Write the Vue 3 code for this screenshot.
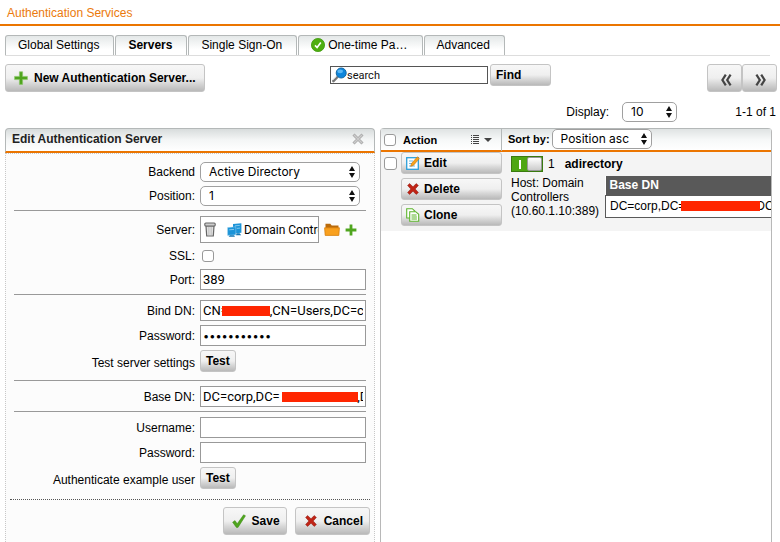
<script setup>
import { ref } from 'vue'

const tabs = [
  { label: 'Global Settings' },
  { label: 'Servers', active: true },
  { label: 'Single Sign-On' },
  { label: 'One-time Pa…', ok: true },
  { label: 'Advanced' }
]
const query = ref('')
const pageSize = ref('10')
const sort = ref('Position asc')
const form = ref({
  backend: 'Active Directory',
  position: '1',
  ssl: false,
  port: '389',
  bindDn: 'CN=' + '\u00a0'.repeat(13) + ',CN=Users,DC=corp',
  bindPassword: 'abcdefghijk',
  baseDn: 'DC=corp,DC=' + '\u00a0'.repeat(24) + ',DC=local',
  username: '',
  password: ''
})
</script>

<template>
  <div class="page">
    <h1 class="title">Authentication Services</h1>

    <nav class="tabs">
      <a v-for="t in tabs" :key="t.label" href="#" class="tab" :class="{ active: t.active }">
        <svg v-if="t.ok" width="14" height="14" viewBox="0 0 14 14">
          <circle cx="7" cy="7" r="6.6" fill="#4fae10" stroke="#3f9a0c" stroke-width=".8" />
          <path d="M4 7.4 6.1 9.6 9.8 4.6" fill="none" stroke="#fff" stroke-width="1.6" />
        </svg>
        {{ t.label }}
      </a>
    </nav>

    <div class="toolbar">
      <div class="tool-left">
        <button class="btn tall">
          <svg width="14" height="14" viewBox="0 0 14 14"><path d="M5.4 0.8h3.2v4.6H13.4v3.2H8.6v4.8H5.4V8.6H.6V5.4h4.8z" fill="#4fa51e" stroke="#8cc76a" stroke-width=".7" /></svg>
          New Authentication Server...
        </button>
      </div>
      <div class="tool-search">
        <label class="search">
          <svg width="16" height="16" viewBox="0 0 16 16">
            <path d="M2.4 14 6 10.4" stroke="#777" stroke-width="2.6" stroke-linecap="round" />
            <path d="M2 13 5.4 9.6" stroke="#ccc" stroke-width="1" />
            <circle cx="10.2" cy="6" r="5" fill="#0e86dc" stroke="#1468a4" stroke-width="1" />
            <ellipse cx="9.2" cy="4.3" rx="2.8" ry="1.9" fill="#5bb8f5" />
          </svg>
          <input v-model="query" type="text" placeholder="search" aria-label="search" />
        </label>
        <button class="btn find">Find</button>
      </div>
      <div class="pager">
        <button class="btn tall page-btn" aria-label="Previous page">
          <svg width="12" height="12" viewBox="0 0 12 12"><path d="M5.8.6 2.4 6l3.4 5.4M10.6.6 7.2 6l3.4 5.4" fill="none" stroke="#444" stroke-width="2.2" /></svg>
        </button>
        <button class="btn tall page-btn" aria-label="Next page">
          <svg width="12" height="12" viewBox="0 0 12 12"><path d="M1.4.6 4.8 6l-3.4 5.4M6.2.6 9.6 6l-3.4 5.4" fill="none" stroke="#444" stroke-width="2.2" /></svg>
        </button>
      </div>
    </div>

    <div class="display">
      <label for="display">Display:</label>
      <span class="select narrow">
        <select id="display" v-model="pageSize"><option>10</option><option>25</option></select>
        <svg width="6" height="12" viewBox="0 0 6 12"><path d="M3 0 6 5H0zM3 12 0 7h6z" fill="#111" /></svg>
      </span>
      <span class="count">1-1 of 1</span>
    </div>

    <main class="columns">
      <section class="panel">
        <header class="panel-head">
          <h2>Edit Authentication Server</h2>
          <button class="close" aria-label="Close">
            <svg width="12" height="12" viewBox="0 0 12 12"><path d="M1.5 1.5 10.5 10.5M10.5 1.5 1.5 10.5" stroke="#aaa" stroke-width="3" /><path d="M2 2 10 10M10 2 2 10" stroke="#ccc" stroke-width="1.2" /></svg>
          </button>
        </header>

        <form class="form" @submit.prevent>
          <div class="group">
            <label for="backend">Backend</label>
            <span class="select">
              <select id="backend" v-model="form.backend"><option>Active Directory</option><option>LDAP</option></select>
              <svg width="6" height="12" viewBox="0 0 6 12"><path d="M3 0 6 5H0zM3 12 0 7h6z" fill="#111" /></svg>
            </span>
            <label for="position">Position:</label>
            <span class="select">
              <select id="position" v-model="form.position"><option>1</option><option>2</option></select>
              <svg width="6" height="12" viewBox="0 0 6 12"><path d="M3 0 6 5H0zM3 12 0 7h6z" fill="#111" /></svg>
            </span>
          </div>

          <div class="group">
            <span class="label">Server:</span>
            <div class="server">
              <div class="server-box">
                <svg class="trash" width="12" height="15" viewBox="0 0 12 15">
                  <path d="M2 4h8l-.7 10H2.7z" fill="#e4e4e4" stroke="#666" stroke-width="1.2" />
                  <path d="M4.4 5v8M6 5v8M7.6 5v8" stroke="#bbb" stroke-width=".7" />
                  <rect x=".8" y="1" width="10.4" height="3" rx="1" fill="#ccc" stroke="#666" stroke-width="1.1" />
                </svg>
                <svg width="15" height="14" viewBox="0 0 15 14">
                  <path d="M6 .9 14.4.2v9.6L6 10.4z" fill="#1c94d8" />
                  <path d="M.6 4.6 8.8 3.8v8l-8.2.6z" fill="#1c94d8" stroke="#9bd3f2" stroke-width=".5" />
                  <path d="M8 2.8l4.8-.4M9.8 5.4l3.2-.3M2.2 6.8l4.8-.4" stroke="#9bd3f2" stroke-width=".8" />
                  <path d="M3 12.2h4l1 1.6H1.6zM9.6 10.2h3l1.6 2H9z" fill="#1678b4" />
                </svg>
                <span>Domain Controllers</span>
              </div>
              <button class="icon" aria-label="Browse">
                <svg width="16" height="13" viewBox="0 0 16 13">
                  <path d="M1.5.8h4.8l1.4 1.6h6.8V6h-13z" fill="#b96b0c" />
                  <path d="M.6 4.8h14.8l-.6 7.6H1.2z" fill="#f9a01e" stroke="#d77f0c" stroke-width=".8" />
                </svg>
              </button>
              <button class="icon" aria-label="Add">
                <svg width="12" height="12" viewBox="0 0 12 12"><path d="M4.6.6h2.8v4h4v2.8h-4v4H4.6v-4h-4V4.6h4z" fill="#4fa51e" /></svg>
              </button>
            </div>
            <label for="ssl">SSL:</label>
            <div class="check-row"><input id="ssl" v-model="form.ssl" class="check" type="checkbox" /></div>
            <label for="port">Port:</label>
            <input id="port" v-model="form.port" class="text" type="text" />
          </div>

          <div class="group">
            <label for="bind">Bind DN:</label>
            <div class="masked">
              <input id="bind" v-model="form.bindDn" class="text" type="text" />
              <span class="mask mask-bind"></span>
            </div>
            <label for="bindpw">Password:</label>
            <input id="bindpw" v-model="form.bindPassword" class="text" type="password" />
            <span class="label low">Test server settings</span>
            <div class="test-row"><button class="btn test">Test</button></div>
          </div>

          <div class="group">
            <label for="base">Base DN:</label>
            <div class="masked">
              <input id="base" v-model="form.baseDn" class="text" type="text" />
              <span class="mask mask-base"></span>
            </div>
          </div>

          <div class="group">
            <label for="user">Username:</label>
            <input id="user" v-model="form.username" class="text" type="text" />
            <label for="pass">Password:</label>
            <input id="pass" v-model="form.password" class="text" type="password" />
            <span class="label low">Authenticate example user</span>
            <div class="test-row"><button class="btn test">Test</button></div>
          </div>

          <div class="actions">
            <button class="btn tall">
              <svg width="14" height="14" viewBox="0 0 14 14"><path d="M.6 8.2 3 6.6l2.2 3.2L11.6.8l1.9 1L6 13.4H4.4z" fill="#4fa51e" stroke="#3d8a14" stroke-width=".5" /></svg>
              Save
            </button>
            <button class="btn tall">
              <svg width="14" height="12" viewBox="0 0 12 12"><path d="M.6 2.4 2.6.6 6 3.8 9.2.6l2.2 1.8L8.2 6l3.2 3.6-2.2 1.8L6 8.2l-3.4 3.2-2-1.8L3.8 6z" fill="#c02416" stroke="#8e1a10" stroke-width=".5" /></svg>
              Cancel
            </button>
          </div>
        </form>
      </section>

      <section class="list">
        <header class="list-head">
          <div class="head-action">
            <input class="check" type="checkbox" aria-label="Select all" />
            <span class="small">Action</span>
            <button class="icon menu" aria-label="Action menu">
              <svg width="21" height="10" viewBox="0 0 21 10">
                <path d="M0 .5h1M0 2.5h1M0 4.5h1M0 6.5h1M0 8.5h1M2 .5h6M2 2.5h6M2 4.5h6M2 6.5h6M2 8.5h6" stroke="#444" />
                <path d="M13 3h8l-4 4z" fill="#444" />
              </svg>
            </button>
          </div>
          <div class="head-sort">
            <label for="sort" class="small">Sort by:</label>
            <span class="select sort">
              <select id="sort" v-model="sort"><option>Position asc</option><option>Position desc</option></select>
              <svg width="6" height="12" viewBox="0 0 6 12"><path d="M3 0 6 5H0zM3 12 0 7h6z" fill="#111" /></svg>
            </span>
          </div>
        </header>

        <article class="row">
          <div class="row-actions">
            <input class="check" type="checkbox" aria-label="Select adirectory" />
            <div class="stack">
              <button class="btn wide">
                <svg width="14" height="14" viewBox="0 0 14 14">
                  <rect x=".7" y="1.7" width="11.6" height="11.6" fill="#fff" stroke="#2b9fd9" stroke-width="1.3" />
                  <path d="M3 5h4M3 7.5h3M3 10h6" stroke="#6bbbe4" />
                  <path d="M4.6 10.4 5.4 7.6 11.4.8l2 1.8-6 6.8z" fill="#f7a21b" stroke="#b96b0c" stroke-width=".5" />
                </svg>
                Edit
              </button>
              <button class="btn wide">
                <svg width="14" height="12" viewBox="0 0 12 12"><path d="M.6 2.4 2.6.6 6 3.8 9.2.6l2.2 1.8L8.2 6l3.2 3.6-2.2 1.8L6 8.2l-3.4 3.2-2-1.8L3.8 6z" fill="#c02416" stroke="#8e1a10" stroke-width=".5" /></svg>
                Delete
              </button>
              <button class="btn wide">
                <svg width="14" height="14" viewBox="0 0 14 14">
                  <path d="M.7.7h5.6L8.8 3v7H.7z" fill="#fff" stroke="#5db52c" stroke-width="1.1" />
                  <path d="M3.7 3.7h6l3 2.6v7h-9z" fill="#fff" stroke="#5db52c" stroke-width="1.1" />
                  <path d="M5.5 7h5M5.5 9h5.4M5.5 11h5.4" stroke="#5db52c" />
                </svg>
                Clone
              </button>
            </div>
          </div>
          <div class="details">
            <div class="name-line">
              <button class="toggle" role="switch" aria-checked="true" aria-label="Enabled"><i></i><b></b></button>
              <span>1</span>
              <strong>adirectory</strong>
            </div>
            <div class="info">
              <p>Host: Domain Controllers (10.60.1.10:389)</p>
              <table class="dn">
                <thead><tr><th>Base DN</th></tr></thead>
                <tbody><tr><td><div>DC=corp,DC=<span class="bar"></span>DC=local</div></td></tr></tbody>
              </table>
            </div>
          </div>
        </article>
      </section>
    </main>
  </div>
</template>

<style>
body { background: #fff; }
</style>

<style scoped>
* { box-sizing: border-box; }
.page {
  min-height: 100vh;
  display: flex;
  flex-direction: column;
  font: 12px/14px "Liberation Sans", Arial, sans-serif;
  color: #000;
}
h1, h2, p { margin: 0; font-size: 12px; }
svg { display: block; flex: none; }
button, input, select { font: inherit; color: inherit; margin: 0; }
.title {
  height: 26px;
  padding: 6px 7px 0;
  font-weight: normal;
  color: #eb7a0c;
  border-bottom: 2px solid #eb7500;
}
.tabs {
  display: flex;
  gap: 1px;
  margin: 9px 10px 0 5px;
  border-bottom: 1px solid #ddd;
}
.tab {
  height: 20px;
  display: flex;
  align-items: center;
  gap: 3px;
  padding: 0 14px 2px 12px;
  color: #000;
  text-decoration: none;
  border: 1px solid #b4b8b8;
  border-bottom: 0;
  border-radius: 3px 3px 0 0;
  background: linear-gradient(#e4e8e8, #fff 70%);
}
.tab.active { font-weight: bold; }
.btn {
  height: 22px;
  display: inline-flex;
  align-items: center;
  padding: 0 5px;
  font-weight: bold;
  white-space: nowrap;
  border: 1px solid #c4c4c4;
  border-radius: 3px;
  background: linear-gradient(#f7f7f7, #efefef 50%, #d8d8d8 70%, #b9b9b9);
}
.btn.tall { height: 28px; padding: 0 8px; gap: 6px; }
.actions .btn.tall { padding-right: 6px; }
.toolbar { display: flex; padding: 8px 3px 0 5px; }
.tool-left { flex: 325 1 0; }
.tool-search { flex: 377 1 0; display: flex; align-items: flex-start; gap: 2px; }
.search {
  width: 158px;
  height: 18px;
  margin-top: 2px;
  display: flex;
  align-items: center;
  border: 1px solid #555;
  background: #fff;
}
.search input {
  flex: 1;
  min-width: 0;
  padding: 2px 0 0;
  border: 0;
  outline: 0;
  background: none;
  font: 11px/14px Roboto, sans-serif;
}
.search input::placeholder { color: #111; }
.find { width: 61px; }
.pager { display: flex; }
.btn.page-btn { width: 35px; justify-content: center; padding: 3px 0 0 2px; }
.display {
  display: flex;
  align-items: center;
  justify-content: flex-end;
  padding: 10px 4px 6px;
}
.count { width: 99px; text-align: right; }
.select { position: relative; display: block; width: 160px; }
.select select {
  display: block;
  width: 100%;
  height: 20px;
  padding: 0 8px;
  appearance: none;
  border: 1px solid #a0a0a0;
  border-radius: 5px;
  background: #fff;
  font: 12px/16px Inter, sans-serif;
}
.select svg { position: absolute; right: 5px; top: 4px; pointer-events: none; }
.select.narrow { width: 55px; margin-left: 13px; }
.select.sort { width: 100px; }
.columns {
  flex: 1;
  display: grid;
  grid-template-columns: 370fr 392fr;
  gap: 5px;
  padding: 0 8px 0 5px;
}
.panel { display: flex; flex-direction: column; min-width: 0; }
.panel-head {
  height: 25px;
  display: flex;
  align-items: center;
  justify-content: space-between;
  padding: 0 10px 2px 6px;
  border: 1px solid #b4b8b8;
  border-bottom: 2px solid #eb7500;
  border-radius: 4px 4px 0 0;
  background: linear-gradient(#d8dcdc, #f4f6f6 50%, #fff);
  color: #222;
}
.close, .icon { display: flex; padding: 0; border: 0; background: none; }
.form {
  flex: 1;
  padding: 1px 4px 7px;
  border: 1px dotted #c8c8c8;
  border-bottom: 0;
  background: #fcfcfc;
}
.group {
  display: grid;
  grid-template-columns: 181fr 166fr;
  column-gap: 5px;
  row-gap: 4px;
  align-items: center;
  margin: 0 4px;
  padding: 5px 0 4px;
  border-bottom: 1px solid #999;
}
.group:first-child { padding-top: 7px; }
.group:nth-child(5) { border-bottom: 0; padding-bottom: 10px; }
.group:nth-child(3) { padding-bottom: 8px; }
.group > label, .group > .label { text-align: right; }
.group > .low { padding-top: 4px; }
.text {
  display: block;
  width: 100%;
  height: 21px;
  padding: 0 2px;
  border: 1px solid #999;
  border-radius: 0;
  background: #fff;
  font: 13px/16px Roboto, sans-serif;
}
.text[type="password"] { font: 11px/16px Inter, sans-serif; }
.server { display: flex; align-items: center; gap: 5px; }
.server-box {
  width: 119px;
  height: 27px;
  display: flex;
  align-items: center;
  gap: 2px;
  padding-left: 3px;
  border: 1px solid #999;
  background: #fff;
  font: 12px/16px Roboto, sans-serif;
  white-space: nowrap;
  overflow: hidden;
}
.trash { margin-right: 9px; }
.check-row { height: 18px; padding: 3px 2px; }
.check {
  display: block;
  flex: none;
  width: 12px;
  height: 12px;
  appearance: none;
  border: 1px solid #999;
  border-radius: 3px;
  background: #fff;
}
.masked { position: relative; }
.mask { position: absolute; top: 6px; height: 10px; background: #ff2600; }
.mask-bind { left: 22px; width: 48px; }
.mask-base { left: 82px; width: 76px; }
.test-row { display: flex; }
.actions {
  display: flex;
  justify-content: flex-end;
  gap: 8px;
  padding-top: 7px;
  border-top: 1px dotted #555;
}
.list { border: 1px solid #b8b8b8; border-width: 0 1px; min-width: 0; border-radius: 4px 4px 0 0; overflow: hidden; }
.list-head {
  height: 24px;
  display: grid;
  grid-template-columns: 121px 1fr;
  border-top: 1px solid #b4b8b8;
  border-bottom: 2px solid #eb7500;
  background: linear-gradient(#dfe3e3, #f6f8f8 50%, #fff);
}
.head-action { display: flex; align-items: center; padding-left: 3px; border-right: 1px solid #b4b8b8; }
.small { font-size: 11px; font-weight: bold; }
.head-action .small { margin-left: 7px; }
.menu { margin: 0 9px 0 auto; }
.head-sort { display: flex; align-items: center; gap: 2px; padding: 0 0 2px 6px; }
.row {
  display: grid;
  grid-template-columns: 121px 1fr;
  column-gap: 9px;
  padding-bottom: 5px;
  background: #f4f4f4;
}
.row-actions { display: flex; gap: 4px; padding-left: 3px; }
.row-actions .check { width: 13px; height: 13px; margin-top: 5px; }
.stack { flex: 1; display: grid; gap: 4px; }
.btn.wide { gap: 4px; padding: 0 4px; }
.details { min-width: 0; padding-top: 4px; }
.name-line { display: flex; align-items: center; gap: 5px; height: 16px; }
.name-line strong { margin-left: 5px; }
.toggle {
  width: 32px;
  height: 16px;
  display: flex;
  align-items: center;
  justify-content: space-between;
  padding: 0 0 0 7px;
  border: 1px solid #3a7a10;
  background: #4ea612;
}
.toggle i { width: 2px; height: 9px; background: #fff; }
.toggle b { width: 15px; height: 14px; border: 1px solid #999; border-radius: 2px; background: linear-gradient(#fff, #ccc); }
.info { display: grid; grid-template-columns: 94px 1fr; padding-top: 4px; }
.dn { width: 100%; table-layout: fixed; border-collapse: collapse; align-self: start; background: #fff; }
.dn th { height: 19px; padding: 0 4px; text-align: left; color: #fff; background: #595959; }
.dn td { height: 22px; padding: 0; border: 1px solid #595959; border-right: 0; }
.dn div { display: flex; align-items: center; padding-left: 4px; white-space: nowrap; overflow: hidden; }
.bar { position: relative; flex: none; width: 79px; height: 10px; margin: 0 -4px; background: #ff2600; }
</style>
